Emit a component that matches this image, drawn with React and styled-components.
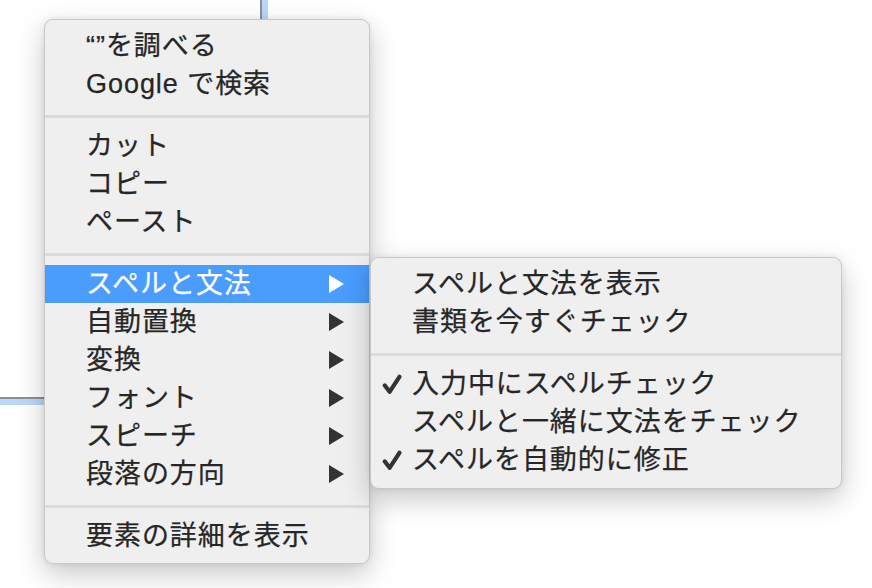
import React from 'react'
import styled, { createGlobalStyle } from 'styled-components'

const textColor = '#262626'
const highlight = '#4a9cfd'

const GlobalStyle = createGlobalStyle`
  html, body {
    margin: 0;
    padding: 0;
    background: #ffffff;
    overflow: hidden;
  }
  body {
    font-family: "Liberation Sans", "Noto Sans CJK JP", sans-serif;
  }
`

const Page = styled.div`
  position: relative;
  width: 872px;
  height: 588px;
  overflow: hidden;
  background: #ffffff;
`

// the focused text field behind the menu (only its corner shows)
const Field = styled.div`
  width: 300px;
  height: 420px;
  margin-top: -21px;
  margin-left: -38px;
  box-sizing: border-box;
  border: 2px solid #8f8f8f;
  box-shadow: 0 0 0 6px #bad7fb;
  background: #ffffff;
`

const Menu = styled.div`
  position: absolute;
  left: ${p => p.$left}px;
  top: ${p => p.$top}px;
  width: ${p => p.$width}px;
  box-sizing: border-box;
  padding: 7px 0 ${p => p.$bottom}px;
  background: #efefef;
  border: 1px solid rgba(0, 0, 0, 0.16);
  border-radius: 9px;
  box-shadow: 0 10px 28px rgba(0, 0, 0, 0.22), 0 0 6px rgba(0, 0, 0, 0.08);
  font-family: "Liberation Sans", "Noto Sans CJK JP", sans-serif;
  font-size: 27px;
  color: ${textColor};
`

const Row = styled.div`
  display: flex;
  align-items: center;
  height: 38px;
  padding-right: 25px;
  background: ${p => (p.$active ? highlight : 'transparent')};
  color: ${p => (p.$active ? '#ffffff' : textColor)};
  white-space: nowrap;
`

const CheckCell = styled.div`
  width: 41px;
  flex: none;
  box-sizing: border-box;
  padding-left: 11px;
  display: flex;
  align-items: center;
`

const Label = styled.span`
  flex: 1;
  line-height: 38px;
  letter-spacing: 0.95px;
  -webkit-text-stroke: 0.25px currentColor;
`

const Separator = styled.div`
  height: 3px;
  margin: 12px 0 9px;
  background: #dcdcdc;
`

const Arrow = ({ active }) => (
  <svg width="16" height="18" viewBox="0 0 16 18">
    <polygon points="1,0 16,9 1,18" fill={active ? '#ffffff' : '#333333'} />
  </svg>
)

const Check = () => (
  <svg width="20" height="21" viewBox="0 0 20 21">
    <path
      d="M2.8 11.5 L7.6 17.8 L17.4 2.8"
      fill="none"
      stroke="#333333"
      strokeWidth="4.2"
      strokeLinecap="round"
      strokeLinejoin="round"
    />
  </svg>
)

const mainItems = [
  { label: '“”を調べる' },
  { label: 'Google で検索' },
  { sep: true },
  { label: 'カット' },
  { label: 'コピー' },
  { label: 'ペースト' },
  { sep: true },
  { label: 'スペルと文法', sub: true, active: true },
  { label: '自動置換', sub: true },
  { label: '変換', sub: true },
  { label: 'フォント', sub: true },
  { label: 'スピーチ', sub: true },
  { label: '段落の方向', sub: true },
  { sep: true },
  { label: '要素の詳細を表示' },
]

const subItems = [
  { label: 'スペルと文法を表示' },
  { label: '書類を今すぐチェック' },
  { sep: true },
  { label: '入力中にスペルチェック', checked: true },
  { label: 'スペルと一緒に文法をチェック' },
  { label: 'スペルを自動的に修正', checked: true },
]

const renderItems = items =>
  items.map((it, i) =>
    it.sep ? (
      <Separator key={i} />
    ) : (
      <Row key={i} $active={it.active}>
        <CheckCell>{it.checked && <Check />}</CheckCell>
        <Label>{it.label}</Label>
        {it.sub && <Arrow active={it.active} />}
      </Row>
    )
  )

export default function App() {
  return (
    <Page>
      <GlobalStyle />
      <Field />
      <Menu $left={44} $top={19} $width={326} $bottom={8}>
        {renderItems(mainItems)}
      </Menu>
      <Menu $left={370} $top={257} $width={472} $bottom={9}>
        {renderItems(subItems)}
      </Menu>
    </Page>
  )
}
